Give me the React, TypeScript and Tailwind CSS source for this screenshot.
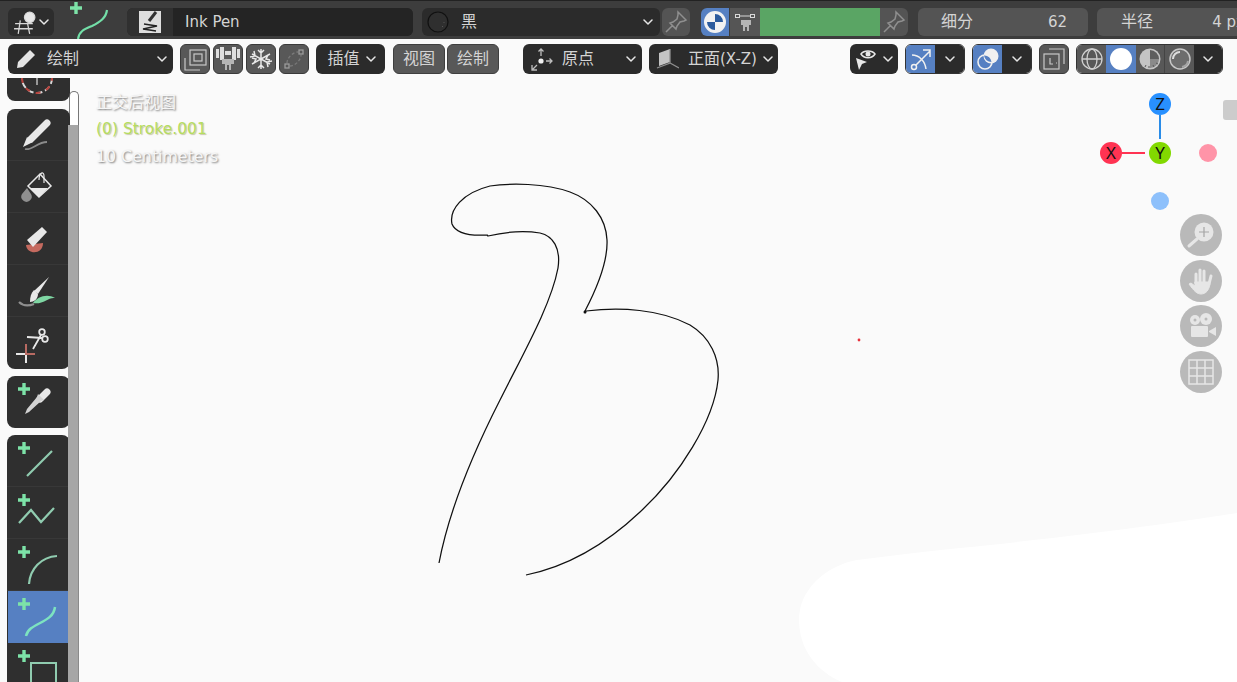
const cjk = { fontFamily: '"DejaVu Sans", "Noto Sans CJK SC", sans-serif' };

const Chevron = ({ className = "" }: { className?: string }) => (
  <svg viewBox="0 0 10 6" className={`w-[10px] h-[6px] shrink-0 ${className}`} fill="none" stroke="#e6e6e6" strokeWidth="1.5" strokeLinecap="round" strokeLinejoin="round">
    <path d="M1 1l4 4 4-4" />
  </svg>
);

const Plus = ({ x, y }: { x: number; y: number }) => (
  <path d={`M${x - 6} ${y}h12M${x} ${y - 6}v12`} stroke="#7de3a8" strokeWidth="3.4" fill="none" />
);

// 28px icon drawn on a 28 grid
const Ico = ({ children }: { children: React.ReactNode }) => (
  <svg viewBox="0 0 28 28" className="w-7 h-7 shrink-0" fill="none" stroke="#c8c8c8" strokeWidth="1.2">
    {children}
  </svg>
);

const PinIcon = () => (
  <Ico>
    <path d="M16 4l8 8-2 1-4 1-3 4-1 3-6-6 3-1 4-3 1-4zM11 17l-7 7" stroke="#8f8f8f" strokeWidth="1.5" />
  </Ico>
);

const TopBar = () => (
  <div className="h-[39px] shrink-0 flex items-start pt-[7px] pl-2 bg-[#3d3d3d] border-t border-[#222222] overflow-hidden relative text-[16px] text-[#d4d4d4]">
    <div className="w-[46px] h-7 rounded-md bg-[#2d2d2d] flex items-center justify-center gap-px shrink-0">
      <svg viewBox="0 0 24 24" className="w-[25px] h-[25px]" fill="none" stroke="#d8d8d8" strokeWidth="1.2">
        <path d="M2 13h17M1 18h18M7 10L5 23M14 13l2 10" />
        <circle cx="16" cy="7" r="5" fill="#e8e8e8" />
      </svg>
      <Chevron />
    </div>
    <div className="w-[40px] h-[39px] ml-4 -mt-2 shrink-0">
      <svg viewBox="0 0 40 39" className="w-10 h-[39px]" fill="none">
        <Plus x={6} y={8} />
        <path d="M8 39c1-8 7-10 14-13 8-4 14-8 15-16" stroke="#73dfa8" strokeWidth="2.2" />
      </svg>
    </div>
    <div className="flex w-[286px] h-7 ml-[17px] rounded-md bg-[#2a2a2a] shrink-0 overflow-hidden">
      <div className="w-[46px] h-7 bg-[#303030] flex items-center justify-center">
        <svg viewBox="0 0 22 22" className="w-[22px] h-[22px]">
          <rect width="22" height="22" fill="#dedede" />
          <path d="M17 1l-7 9" stroke="#333333" strokeWidth="3" fill="none" />
          <path d="M5 13l13 2-14 3 13 2" stroke="#222222" strokeWidth="1.300" fill="none" />
        </svg>
      </div>
      <div className="flex-1 bg-[#242424] flex items-center pl-3 text-[15px]" style={cjk}>Ink Pen</div>
    </div>
    <div className="flex items-center w-[238px] h-7 ml-[9px] rounded-md bg-[#2b2b2b] shrink-0 pr-[7px]">
      <svg viewBox="0 0 22 22" className="w-[22px] h-[22px] ml-[5px]">
        <circle cx="11" cy="11" r="10" fill="#2f2f2f" stroke="#111111" strokeWidth="1.200" />
        <path d="M15 16l1-1M17 12v-1" stroke="#555555" />
      </svg>
      <span className="ml-[12px] flex-1" style={cjk}>黑</span>
      <Chevron />
    </div>
    <div className="w-7 h-7 ml-[2px] rounded-md bg-[#545454] flex items-center justify-center shrink-0"><PinIcon /></div>
    <div className="flex h-7 ml-[11px] rounded-md overflow-hidden shrink-0">
      <div className="w-7 bg-[#5680c2] flex items-center justify-center">
        <svg viewBox="0 0 24 24" className="w-6 h-6">
          <circle cx="12" cy="12" r="11" fill="#f2f2f2" />
          <path d="M12 4a8 8 0 0 1 8 8h-8zM12 12H4a8 8 0 0 0 8 8z" fill="#2c5b9d" />
        </svg>
      </div>
      <div className="w-[30px] ml-px bg-[#555555] flex items-center justify-center">
        <svg viewBox="0 0 22 22" className="w-[22px] h-[22px]" fill="none" stroke="#d8d8d8">
          <rect x="1.5" y="3.5" width="4" height="3" />
          <rect x="16.5" y="3.5" width="4" height="3" />
          <path d="M6 5h10" />
          <path d="M7 9h10v5h-2v6h-2v-4h-2v4H9v-6H7z" fill="#b5b5b5" stroke="none" />
        </svg>
      </div>
      <div className="w-[120px] bg-[#5aa564]" />
      <div className="w-7 bg-[#545454] flex items-center justify-center"><PinIcon /></div>
    </div>
    <div className="flex items-center justify-between w-[170px] h-7 ml-[10px] rounded-md bg-[#545454] pl-[23px] pr-[21px] shrink-0" style={cjk}>
      <span>细分</span>
      <span className="text-[15px]">62</span>
    </div>
    <div className="flex items-center justify-between w-[170px] h-7 ml-[9px] rounded-md bg-[#545454] pl-[24px] pr-[22px] shrink-0" style={cjk}>
      <span>半径</span>
      <span className="text-[15px]">4 px</span>
    </div>
  </div>
);

const grey = "w-[30px] h-[30px] rounded-md bg-[#585858] flex items-center justify-center shrink-0 border border-[#3a3a3a]";

const OptionBar = () => (
  <div className="h-[39px] shrink-0 flex items-start pt-[5px] pl-2 text-[16px] text-[#d4d4d4]" style={cjk}>
    <div className="flex items-center w-[165px] h-[30px] rounded-md bg-[#2b2b2b] pl-[7px] pr-[6px] shrink-0">
      <svg viewBox="0 0 22 22" className="w-[22px] h-[22px]">
        <path d="M15 2l5 5-12 12-6 1 1-6z" fill="#e4e4e4" />
      </svg>
      <span className="ml-[10px] flex-1">绘制</span>
      <Chevron />
    </div>
    <div className={`${grey} ml-[7px]`}>
      <Ico>
        <rect x="9" y="5" width="16" height="15" />
        <rect x="13" y="9" width="8" height="7" />
        <path d="M4 13v12h15" />
      </Ico>
    </div>
    <div className={`${grey} ml-[3px]`}>
      <svg viewBox="0 0 26 26" className="w-[26px] h-[26px]" fill="#dedede">
        <path d="M1 3h3v9H1zM5 1h4v13H5zM10 5h6v4h-6zM17 1h4v13h-4zM22 3h3v9h-3z" />
        <path d="M7 13h12v5h-3v6h-2v-5h-2v5h-2v-6H7z" fill="#b5b5b5" />
      </svg>
    </div>
    <div className={`${grey} ml-[3px]`}>
      <svg viewBox="0 0 24 24" className="w-6 h-6" fill="none" stroke="#e8e8e8" strokeWidth="1.5">
        <path d="M12 2v20M3 7l18 10M3 17L21 7M9 3l3 3 3-3M9 21l3-3 3 3M3 11l4 1-2 4M21 13l-4-1 2-4M5 4l1 5-5 1M19 20l-1-5 5-1" />
      </svg>
    </div>
    <div className={`${grey} ml-[3px]`}>
      <svg viewBox="0 0 24 24" className="w-6 h-6" fill="none" stroke="#7a7a7a" strokeWidth="1.3">
        <rect x="17" y="3" width="4" height="4" stroke="#9b9b9b" />
        <rect x="3" y="17" width="4" height="4" stroke="#9b9b9b" />
        <path d="M5 16c0-5 6-11 11-11" strokeDasharray="3 2" />
        <path d="M8 19c5 0 11-6 11-11" strokeDasharray="3 2" />
      </svg>
    </div>
    <div className="flex items-center justify-center gap-[6px] w-[69px] h-[30px] ml-[7px] pl-[2px] rounded-md bg-[#2b2b2b] shrink-0">
      <span>插值</span>
      <Chevron />
    </div>
    <div className="flex items-center justify-center w-[52px] h-[30px] ml-2 rounded-md bg-[#585858] border border-[#3f3f3f] shrink-0">视图</div>
    <div className="flex items-center justify-center w-[52px] h-[30px] ml-[2px] rounded-md bg-[#585858] border border-[#3f3f3f] shrink-0">绘制</div>
    <div className="flex items-center w-[119px] h-[30px] ml-6 rounded-md bg-[#2b2b2b] pl-[6px] pr-[6px] shrink-0">
      <svg viewBox="0 0 24 24" className="w-6 h-6" fill="none" stroke="#bdbdbd" strokeWidth="1.3">
        <circle cx="12" cy="14" r="2.6" fill="#f0f0f0" stroke="none" />
        <path d="M12 9V2M9.5 4.5L12 2l2.5 2.500M17 14h6M20.500 11.500L23 14l-2.500 2.500M8 18l-5 5M3 18v5h5" />
      </svg>
      <span className="ml-[9px] flex-1">原点</span>
      <Chevron />
    </div>
    <div className="flex items-center w-[129px] h-[30px] ml-[7px] rounded-md bg-[#2b2b2b] pl-[6px] pr-[5px] shrink-0">
      <svg viewBox="0 0 24 24" className="w-6 h-6">
        <path d="M4 6l11-4v13l-11 4z" fill="#c4c4c4" />
        <path d="M15 2v14l-13 5M15 16l9 5" fill="none" stroke="#8f8f8f" strokeWidth="1.300" />
      </svg>
      <span className="ml-[9px] flex-1 whitespace-nowrap">正面<span className="text-[15px]">(X-Z)</span></span>
      <Chevron />
    </div>
    <div className="flex items-center justify-between w-[48px] h-[30px] ml-[72px] rounded-md bg-[#2b2b2b] pl-[3px] pr-[5px] shrink-0">
      <svg viewBox="0 0 24 24" className="w-6 h-6">
        <path d="M8 7c3-4 11-4 14 0-3 5-11 5-14 0z" fill="none" stroke="#e8e8e8" strokeWidth="1.500" />
        <circle cx="15" cy="7" r="2.500" fill="#e8e8e8" />
        <path d="M3 11l11 4-5 2-3 6z" fill="#e8e8e8" />
      </svg>
      <Chevron />
    </div>
    <div className="flex w-[60px] h-[30px] ml-[7px] rounded-md overflow-hidden shrink-0 border border-[#333333]">
      <div className="w-[29px] bg-[#5680c2] flex items-center justify-center">
        <svg viewBox="0 0 24 24" className="w-6 h-6" fill="none" stroke="#f0f0f0" strokeWidth="1.500">
          <circle cx="5" cy="20" r="2.500" />
          <path d="M7 18l14-14M14 3h7v7" />
          <path d="M3 8c7 0 13 6 14 14" />
        </svg>
      </div>
      <div className="flex-1 bg-[#2b2b2b] flex items-center justify-center"><Chevron /></div>
    </div>
    <div className="flex w-[60px] h-[30px] ml-[7px] rounded-md overflow-hidden shrink-0 border border-[#333333]">
      <div className="w-[29px] bg-[#5680c2] flex items-center justify-center">
        <svg viewBox="0 0 24 24" className="w-6 h-6">
          <circle cx="15" cy="9" r="7.500" fill="#f0f0f0" />
          <circle cx="9" cy="15" r="7" fill="none" stroke="#f0f0f0" strokeWidth="1.600" />
          <path d="M8 8.500A7 7 0 0 1 15.500 15 7.500 7.500 0 0 1 8 8.500z" fill="#5680c2" />
        </svg>
      </div>
      <div className="flex-1 bg-[#2b2b2b] flex items-center justify-center"><Chevron /></div>
    </div>
    <div className={`${grey} ml-[7px]`}>
      <Ico>
        <rect x="4" y="9" width="15" height="15" />
        <path d="M9 4h15v15" />
        <path d="M10 13v6h3M16 18h1" />
      </Ico>
    </div>
    <div className="flex w-[147px] h-[30px] ml-[7px] rounded-md overflow-hidden shrink-0 border border-[#333333]">
      <div className="w-[29px] bg-[#585858] flex items-center justify-center">
        <svg viewBox="0 0 24 24" className="w-6 h-6" fill="none" stroke="#cfcfcf" strokeWidth="1.300">
          <circle cx="12" cy="12" r="10" />
          <ellipse cx="12" cy="12" rx="5" ry="10" />
          <path d="M2 12h20" />
        </svg>
      </div>
      <div className="w-[30px] bg-[#5680c2] flex items-center justify-center">
        <div className="w-[22px] h-[22px] rounded-full bg-white" />
      </div>
      <div className="w-[29px] bg-[#585858] flex items-center justify-center border-r border-[#444444]">
        <svg viewBox="0 0 24 24" className="w-6 h-6">
          <circle cx="12" cy="12" r="10.500" fill="#c4c4c4" />
          <path d="M12 3a9 9 0 0 1 9 9h-9z" fill="#5e5e5e" />
          <path d="M12 12h9a9 9 0 0 1-9 9z" fill="#8a8a8a" />
          <path d="M8 18l-1 2M11 19v2M15 18l1 2M18 16l2 1" stroke="#585858" />
        </svg>
      </div>
      <div className="w-[29px] bg-[#585858] flex items-center justify-center">
        <svg viewBox="0 0 24 24" className="w-6 h-6">
          <circle cx="12" cy="12" r="10" fill="#6d6d6d" stroke="#c8c8c8" strokeWidth="1.500" />
          <path d="M5 12a7 7 0 0 1 7-7" fill="none" stroke="#dddddd" strokeWidth="2" />
          <path d="M14 20a7 7 0 0 0 6-6" fill="none" stroke="#a5a5a5" strokeWidth="2" />
        </svg>
      </div>
      <div className="flex-1 bg-[#2b2b2b] flex items-center justify-center"><Chevron /></div>
    </div>
  </div>
);

// Tool icons keep the picture's own x position, y is local to the cell
const Tool = ({ active, children }: { active?: boolean; children?: React.ReactNode }) => (
  <div className={`h-[52px] ${active ? "bg-[#5680c2] mx-px" : "border-b border-[#383838] last:border-b-0"}`}>
    <svg viewBox="7 0 63 52" className={`w-[63px] h-[52px] ${active ? "-ml-px" : ""}`} fill="none">
      {children}
    </svg>
  </div>
);

const panel = "w-[63px] rounded-lg bg-[#2f2f2f] shrink-0 overflow-hidden relative z-10";

const ToolShelf = () => (
  <div className="flex flex-col gap-[7px] pl-[7px] h-full overflow-hidden">
    <div className={`${panel} h-[23px] rounded-t-none`}>
      <svg viewBox="7 78 63 23" className="w-[63px] h-[23px]" fill="none">
        <circle cx="37" cy="78" r="15" stroke="#d8d8d8" strokeWidth="2" strokeDasharray="6 3" />
        <path d="M22 78a15 15 0 0 0 30 0" stroke="#b5423c" strokeWidth="2" strokeDasharray="5 6" />
        <path d="M37 78v7" stroke="#bbbbbb" strokeWidth="1.500" />
      </svg>
    </div>
    <div className={`${panel} h-[260px] mt-px`}>
      <Tool>
        <path d="M47 14L31 30" stroke="#e8e8e8" strokeWidth="7" strokeLinecap="round" />
        <path d="M27 28l-4 10 10-5z" fill="#e8e8e8" />
        <path d="M25 40c7 2 12-7 22-7" stroke="#8b8b8b" strokeWidth="1.800" />
      </Tool>
      <Tool>
        <path d="M40 13l11 12-12 11-11-11z" stroke="#e8e8e8" strokeWidth="1.500" />
        <path d="M30 27h18l-9 9z" fill="#e8e8e8" />
        <path d="M39 19c0-8 5-9 5-4v7" stroke="#e8e8e8" strokeWidth="1.200" />
        <path d="M27 27l4 6a5.200 5.200 0 1 1-9 0z" fill="#8f8f8f" />
      </Tool>
      <Tool>
        <path d="M26 32c1 10 17 10 17-2z" fill="#c56a5f" />
        <path d="M47 19l-5-5-15 13 6 7z" fill="#e8e8e8" />
      </Tool>
      <Tool>
        <path d="M49 12L38 29l-4-3z" fill="#e8e8e8" />
        <path d="M34 25l4 4c0 5-4 8-8 8 0-5 1-9 4-12z" fill="#e8e8e8" />
        <path d="M33 38c4-6 14-10 22-5-7-1-12 7-22 5z" fill="#7fd6a3" />
        <path d="M19 37c4 4 10 4 15 2" stroke="#8f8f8f" strokeWidth="2.200" />
      </Tool>
      <Tool>
        <circle cx="42" cy="15" r="2.800" stroke="#e8e8e8" strokeWidth="1.800" />
        <circle cx="45" cy="22" r="2.800" stroke="#e8e8e8" strokeWidth="1.800" />
        <path d="M41 18l-8 14M43 21l-16-1" stroke="#e8e8e8" strokeWidth="1.800" />
        <path d="M16 37h10v9" stroke="#e8e8e8" strokeWidth="2" />
        <path d="M26 27v10h9" stroke="#b86a62" strokeWidth="2" />
      </Tool>
    </div>
    <div className={`${panel} h-[52px]`}>
      <svg viewBox="7 0 63 52" className="w-[63px] h-[52px]" fill="none">
        <Plus x={24} y={13} />
        <path d="M47 16L40 23" stroke="#e8e8e8" strokeWidth="7" strokeLinecap="round" />
        <path d="M38 18l6 6-3 1-12 11-4 2 2-5 10-12z" fill="#d2d2d2" />
      </svg>
    </div>
    <div className={`${panel} h-[260px] rounded-b-none`}>
      <Tool>
        <Plus x={24} y={13} />
        <path d="M27 41l25-25" stroke="#90ccb0" strokeWidth="2.200" />
      </Tool>
      <Tool>
        <Plus x={24} y={13} />
        <path d="M19 36l12-13 10 12 13-14" stroke="#90ccb0" strokeWidth="2.200" />
      </Tool>
      <Tool>
        <Plus x={24} y={13} />
        <path d="M29 45c1-15 12-27 28-28" stroke="#90ccb0" strokeWidth="2.200" />
      </Tool>
      <Tool active>
        <Plus x={24} y={13} />
        <path d="M26 45c3-14 27-12 29-29" stroke="#7de3c0" strokeWidth="2.500" />
      </Tool>
      <Tool>
        <Plus x={24} y={13} />
        <rect x="31" y="20" width="25" height="30" stroke="#90ccb0" strokeWidth="2" />
      </Tool>
    </div>
  </div>
);

const GizmoBall = ({ className, label }: { className: string; label?: string }) => (
  <div className={`absolute rounded-full flex items-center justify-center text-[17px] text-[#111111] font-['Noto_Sans'] ${className}`}>
    {label}
  </div>
);

const navBtn = "absolute left-[1180px] w-[42px] h-[42px] rounded-full bg-[#b9b9b9] flex items-center justify-center";

const Viewport = () => (
  <div className="relative flex-1 min-h-0">
    {/* drawing canvas, coordinates are window pixels */}
    <svg viewBox="0 78 1237 604" className="absolute inset-0 w-[1237px] h-[604px]" fill="none">
      <path d="M1237 513C1150 527 1040 540 960 548 920 552 890 556 857 560 825 566 799 590 799 620 799 650 818 672 842 682H1237z" fill="#ffffff" />
      <path
        d="M439 563C449 510 472 455 500 400 524 352 551 305 558 268 561 248 553 236 540 233 522 230 505 232 488 236L487 235C470 236 456 234 452 224 449 210 462 193 490 186 510 183 545 183 570 192 592 200 606 218 607 240 608 262 597 288 585 311L585 313 586 311C620 307 660 309 690 325 710 337 720 358 718 380 714 420 680 475 640 512 605 545 565 567 526 575"
        stroke="#101010"
        strokeWidth="1.250"
      />
      <circle cx="585" cy="312" r="1.500" fill="#101010" />
      <circle cx="859" cy="340" r="1.400" fill="#e8323c" />
    </svg>

    <div className="absolute left-[69px] top-[13px] bottom-0 w-[10px] rounded-t-md bg-white border border-[#777777] border-b-0" />

    <ToolShelf />

    <div className="absolute z-20 left-[68px] top-[47px] bottom-0 w-[11px] bg-[#a6a6a6] border-r border-[#8a8a8a]" />

    <div className="absolute left-[96px] top-[11px] text-[16px] leading-[27px] text-[#f6f6f6] [text-shadow:1px_1px_2px_#777777]" style={cjk}>
      <div>正交后视图</div>
      <div className="text-[15.500px] text-[#b5dc5f] [text-shadow:1px_1px_1px_#c8c8a8]">(0) Stroke.001</div>
      <div className="text-[15.800px]">10 Centimeters</div>
    </div>

    {/* navigation gizmo */}
    <div className="absolute left-[1159px] top-[37px] w-[2px] h-[24px] bg-[#2a8ce8]" />
    <div className="absolute left-[1122px] top-[74px] w-[23px] h-[2px] bg-[#ff3352]" />
    <GizmoBall className="left-[1149px] top-[15px] w-[22px] h-[22px] bg-[#2890ff]" label="Z" />
    <GizmoBall className="left-[1100px] top-[64px] w-[22px] h-[22px] bg-[#ff3352]" label="X" />
    <GizmoBall className="left-[1149px] top-[64px] w-[22px] h-[22px] bg-[#82d900]" label="Y" />
    <GizmoBall className="left-[1199px] top-[66px] w-[18px] h-[18px] bg-[#ff94a8]" />
    <GizmoBall className="left-[1151px] top-[114px] w-[18px] h-[18px] bg-[#8dc0fb]" />

    <div className={`${navBtn} top-[136px]`}>
      <svg viewBox="0 0 32 32" className="w-8 h-8" fill="none">
        <circle cx="19" cy="13" r="9.500" fill="#e6e6e6" />
        <path d="M19 8v10M14 13h10" stroke="#a5a5a5" strokeWidth="1.200" />
        <path d="M12 20l-8 7" stroke="#e6e6e6" strokeWidth="3" strokeLinecap="round" />
      </svg>
    </div>
    <div className={`${navBtn} top-[182px]`}>
      <svg viewBox="0 0 32 32" className="w-8 h-8" fill="none" stroke="#e6e6e6" strokeWidth="3" strokeLinecap="round">
        <path d="M11 18V9M15 17V5M19 17V6M24 19l2-8" />
        <path d="M10 17h14l1 2c-1 6-4 10-9 10-4 0-7-3-12-10l2-1 4 3z" fill="#e6e6e6" strokeWidth="1" />
      </svg>
    </div>
    <div className={`${navBtn} top-[227px]`}>
      <svg viewBox="0 0 32 32" className="w-8 h-8" fill="#e6e6e6">
        <circle cx="10" cy="10" r="5" />
        <circle cx="21" cy="9" r="6" />
        <circle cx="10" cy="10" r="1.500" fill="#b9b9b9" />
        <circle cx="21" cy="9" r="1.500" fill="#b9b9b9" />
        <rect x="6" y="16" width="17" height="11" rx="1" />
        <path d="M24 21l7-4v9l-7-4z" />
      </svg>
    </div>
    <div className={`${navBtn} top-[273px]`}>
      <svg viewBox="0 0 26 26" className="w-[26px] h-[26px]" fill="none" stroke="#e6e6e6" strokeWidth="1.500">
        <rect x="1" y="1" width="24" height="24" />
        <path d="M9 1v24M17 1v24M1 9h24M1 17h24" />
      </svg>
    </div>

    <div className="absolute right-0 top-[22px] w-[14px] h-[20px] rounded-l-[3px] bg-[#cccccc]" />
  </div>
);

export default function App() {
  return (
    <div className="w-[1237px] h-[682px] flex flex-col overflow-hidden bg-[#fafafa]" style={cjk}>
      <TopBar />
      <div className="flex-1 min-h-0 flex flex-col">
        <OptionBar />
        <Viewport />
      </div>
    </div>
  );
}
